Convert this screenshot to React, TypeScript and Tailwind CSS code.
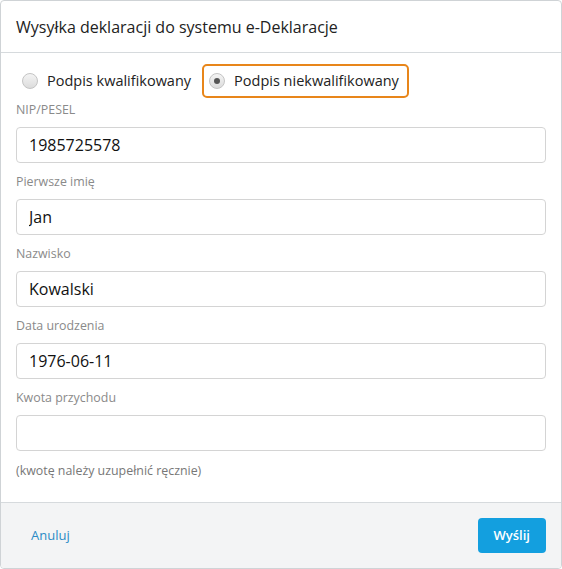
import { useState } from 'react';

const fields = [
  { label: 'NIP/PESEL', value: '1985725578' },
  { label: 'Pierwsze imię', value: 'Jan' },
  { label: 'Nazwisko', value: 'Kowalski' },
  { label: 'Data urodzenia', value: '1976-06-11' },
  { label: 'Kwota przychodu', value: '' },
];

function Radio({ checked }: { checked: boolean }) {
  return (
    <span className="w-[16px] h-[16px] rounded-full border border-[#c4c4c4] bg-gradient-to-b from-[#f4f4f4] to-[#dcdcdc] flex items-center justify-center shrink-0">
      {checked && <span className="w-[6px] h-[6px] rounded-full bg-[#555]" />}
    </span>
  );
}

export default function App() {
  const [sign, setSign] = useState<'k' | 'n'>('n');
  const [values, setValues] = useState(fields.map((f) => f.value));

  return (
    <div className="w-[562px] h-[569px] bg-white font-['Open_Sans',sans-serif]">
      <div className="h-full border border-[#cfd3d6] rounded-[4px] flex flex-col overflow-hidden">
        <div className="h-[52px] border-b border-[#d6dadd] flex items-center px-[15px] shrink-0">
          <h1 className="text-[16px] text-[#222]">Wysyłka deklaracji do systemu e-Deklaracje</h1>
        </div>

        <div className="flex-1 px-[15px] pt-[11px]">
          <div className="flex items-center h-[34px] mb-[4px]">
            <button
              type="button"
              onClick={() => setSign('k')}
              className={`flex items-center gap-[9px] h-[34px] pl-[4px] pr-[6px] rounded-[5px] border-2 ${sign === 'k' ? 'border-[#e8861a]' : 'border-transparent'}`}
            >
              <Radio checked={sign === 'k'} />
              <span className="text-[14.5px] text-[#222]">Podpis kwalifikowany</span>
            </button>
            <button
              type="button"
              onClick={() => setSign('n')}
              className={`ml-[3px] flex items-center gap-[9px] h-[34px] pl-[5px] pr-[8px] rounded-[5px] border-2 ${sign === 'n' ? 'border-[#e8861a]' : 'border-transparent'}`}
            >
              <Radio checked={sign === 'n'} />
              <span className="text-[14.5px] text-[#222]">Podpis niekwalifikowany</span>
            </button>
          </div>

          {fields.map((f, i) => (
            <div key={f.label} className="mb-[11px]">
              <label className="block text-[12.4px] text-[#8a8a8a] leading-[16px] mb-[9px]">{f.label}</label>
              <input
                value={values[i]}
                onChange={(e) => setValues(values.map((v, j) => (j === i ? e.target.value : v)))}
                className="w-full h-[36px] px-[12px] border border-[#d4d4d4] rounded-[4px] text-[16px] text-[#111] focus:outline-none"
              />
            </div>
          ))}
          <p className="text-[12.4px] text-[#777] mt-[1px]">(kwotę należy uzupełnić ręcznie)</p>
        </div>

        <div className="h-[66px] border-t border-[#d6dadd] bg-[#f3f4f5] flex items-center justify-between px-[15px] shrink-0">
          <button type="button" className="text-[13px] text-[#2b8bc6] pl-[15px]">Anuluj</button>
          <button type="button" className="h-[35px] px-[16px] rounded-[4px] bg-[#139fdf] text-white text-[13px] font-semibold">Wyślij</button>
        </div>
      </div>
    </div>
  );
}
